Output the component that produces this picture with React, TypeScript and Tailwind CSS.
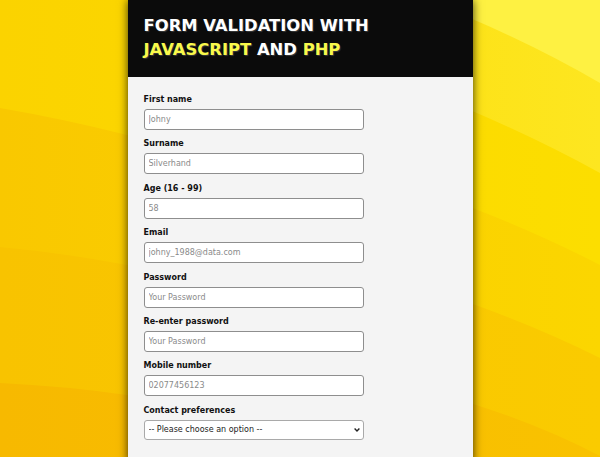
import React from "react";

const fields = [
  { label: "First name", placeholder: "Johny", type: "text" },
  { label: "Surname", placeholder: "Silverhand", type: "text" },
  { label: "Age (16 - 99)", placeholder: "58", type: "text" },
  { label: "Email", placeholder: "johny_1988@data.com", type: "email" },
  { label: "Password", placeholder: "Your Password", type: "password" },
  { label: "Re-enter password", placeholder: "Your Password", type: "password" },
  { label: "Mobile number", placeholder: "02077456123", type: "text" },
];

// each band: boundary curve + colour (left -> right) of the area above it
const Background = () => (
  <svg
    className="absolute inset-0 h-full w-full"
    viewBox="0 0 600 457"
    preserveAspectRatio="none"
  >
    <defs>
      <linearGradient id="g0" x1="0" x2="1" y1="0" y2="0">
        <stop offset="0" stopColor="#f7b900" />
        <stop offset="1" stopColor="#f9c200" />
      </linearGradient>
      <linearGradient id="g1" x1="0" x2="1" y1="0" y2="0">
        <stop offset="0" stopColor="#f8c300" />
        <stop offset="1" stopColor="#facb00" />
      </linearGradient>
      <linearGradient id="g2" x1="0" x2="1" y1="0" y2="0">
        <stop offset="0" stopColor="#f9c800" />
        <stop offset="1" stopColor="#fbd600" />
      </linearGradient>
      <linearGradient id="g3" x1="0" x2="1" y1="0" y2="0">
        <stop offset="0" stopColor="#fbd300" />
        <stop offset="1" stopColor="#fcde00" />
      </linearGradient>
      <linearGradient id="g4" x1="0" x2="1" y1="0" y2="0">
        <stop offset="0" stopColor="#fcd800" />
        <stop offset="1" stopColor="#fde620" />
      </linearGradient>
    </defs>
    <rect width="600" height="457" fill="url(#g0)" />
    <path d="M0 0 L0 383 Q64 386 127 395 C240 397 360 385 470 403 Q540 425 600 456 L600 0 Z" fill="url(#g1)" />
    <path d="M0 0 L0 247 Q64 253 127 265 C240 280 360 270 470 303 Q540 328 600 358 L600 0 Z" fill="url(#g2)" />
    <path d="M0 0 L0 108 Q64 119 127 135 C240 160 360 160 470 207 Q540 234 600 265 L600 0 Z" fill="url(#g3)" />
    <path d="M0 0 L0 -25 Q64 -14 127 0 C240 30 360 60 470 110 Q540 140 600 173 L600 0 Z" fill="url(#g4)" />
    <path d="M0 0 L0 -150 Q64 -130 127 -100 C240 -60 360 -30 470 18 Q540 48 600 83 L600 0 Z" fill="#fef142" />
  </svg>
);

export default function App() {
  return (
    <div className="relative h-[457px] w-full overflow-hidden font-['DejaVu_Sans',Verdana,sans-serif]">
      <Background />
      <div className="relative mx-auto min-h-[457px] w-[345px] bg-[#f4f4f4] shadow-[0_0_9px_rgba(0,0,0,0.75)]">
        <header className="h-[77px] bg-[#0b0b0b] pl-[16px] pt-[14px]">
          <h1 className="text-[16.4px] font-bold leading-[24px] text-white [text-shadow:1px_1px_1px_#3a3a3a]">
            FORM VALIDATION WITH
            <br />
            <span className="text-[#f9f94a]">JAVASCRIPT</span> AND{" "}
            <span className="text-[#f9f94a]">PHP</span>
          </h1>
        </header>
        <form className="px-[16px] pt-[17px] pb-6">
          {fields.map((f) => (
            <div key={f.label} className="mb-[8.4px]">
              <label className="mb-[3px] block text-[8px] font-bold leading-[12px] text-[#111]">
                {f.label}
              </label>
              <input
                type={f.type}
                placeholder={f.placeholder}
                className="block h-[21px] w-[220px] rounded-[3px] border-[1.5px] border-[#8e8e8e] bg-white px-[4px] text-[8px] text-[#222] outline-none placeholder:text-[#8a8a8a]"
              />
            </div>
          ))}
          <div>
            <label className="mb-[3px] block text-[8px] font-bold leading-[12px] text-[#111]">
              Contact preferences
            </label>
            <div className="relative w-[220px]">
              <select className="block h-[20px] w-full appearance-none rounded-[3px] border border-[#a9a9a9] bg-white px-[4px] text-[8px] text-[#222] outline-none">
                <option>-- Please choose an option --</option>
              </select>
              <svg
                className="pointer-events-none absolute right-[4px] top-[8px]"
                width="6"
                height="4"
                viewBox="0 0 6 4"
              >
                <polyline points="0.6,0.6 3,3 5.4,0.6" fill="none" stroke="#222" strokeWidth="1.4" />
              </svg>
            </div>
          </div>
        </form>
      </div>
    </div>
  );
}
